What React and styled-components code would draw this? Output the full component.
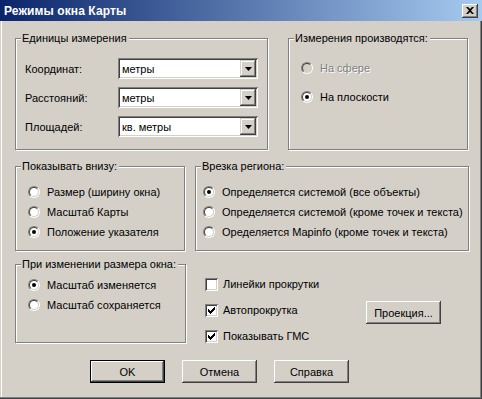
import React from 'react';
import styled, { createGlobalStyle } from 'styled-components';

const FACE = '#D4D0C8';

const Global = createGlobalStyle`
  html, body { margin: 0; padding: 0; background: ${FACE}; }
  body {
    font-family: "Liberation Sans", Arial, sans-serif;
    font-size: 11px;
    color: #000;
  }
  * { box-sizing: border-box; }
`;

const Window = styled.div`
  width: 482px;
  height: 399px;
  background: ${FACE};
  box-shadow: inset -1px -1px #404040, inset -2px -2px #808080,
    inset 1px 0 ${FACE}, inset 2px 0 #fff;
  display: flex;
  flex-direction: column;
  overflow: hidden;
`;

const TitleBar = styled.div`
  height: 21px;
  flex: none;
  background: linear-gradient(to right, #0a246a, #a6caf0);
  display: flex;
  align-items: center;
  justify-content: space-between;
  padding: 0 4px 0 4px;
  color: #fff;
  font-weight: bold;
  font-size: 12px;
  letter-spacing: 0.1px;
`;

const CloseBtn = styled.div`
  width: 16px;
  height: 14px;
  background: ${FACE};
  box-shadow: inset -1px -1px #404040, inset 1px 1px #fff,
    inset -2px -2px #808080, inset 2px 2px ${FACE};
  display: flex;
  align-items: center;
  justify-content: center;
`;

const Body = styled.div`
  flex: 1;
  display: flex;
  flex-direction: column;
  padding: 17px 0 0 15px;
`;

const Row = styled.div`
  display: flex;
  align-items: flex-start;
  gap: ${(p) => p.$gap}px;
  margin-top: ${(p) => p.$mt || 0}px;
`;

const Group = styled.div`
  position: relative;
  flex: none;
  width: ${(p) => p.$w}px;
  height: ${(p) => p.$h}px;
  border: 1px solid #808080;
  box-shadow: inset 1px 1px #fff, 1px 1px #fff;
  padding: ${(p) => p.$pt}px 0 0 ${(p) => p.$pl}px;
`;

const Caption = styled.span`
  position: absolute;
  top: -7px;
  left: 5px;
  padding: 0 2px 0 1px;
  line-height: 13px;
  background: ${FACE};
  white-space: nowrap;
`;

const UnitsGrid = styled.div`
  display: grid;
  grid-template-columns: 93px 140px;
  row-gap: 8px;
  align-items: center;
`;

const Label = styled.span`
  white-space: nowrap;
`;

const Combo = styled.div`
  height: 21px;
  background: #fff;
  box-shadow: inset 1px 1px #808080, inset -1px -1px #fff,
    inset 2px 2px #404040, inset -2px -2px ${FACE};
  display: flex;
  align-items: center;
  justify-content: space-between;
  padding: 2px 2px 2px 4px;
`;

const DropBtn = styled.div`
  width: 16px;
  height: 17px;
  background: ${FACE};
  box-shadow: inset -1px -1px #404040, inset 1px 1px ${FACE},
    inset -2px -2px #808080, inset 2px 2px #fff;
  display: flex;
  align-items: center;
  justify-content: center;
`;

const List = styled.div`
  display: flex;
  flex-direction: column;
  gap: ${(p) => p.$gap || 0}px;
`;

const OptionRow = styled.div`
  display: flex;
  align-items: center;
  gap: ${(p) => p.$gap || 7}px;
  height: ${(p) => p.$h || 20}px;
  white-space: nowrap;
  color: ${(p) => (p.$disabled ? '#808080' : '#000')};
  text-shadow: ${(p) => (p.$disabled ? '1px 1px #fff' : 'none')};
`;

const RadioOuter = styled.span`
  flex: none;
  width: 12px;
  height: 12px;
  border-radius: 50%;
  border: 1px solid;
  border-color: #808080 #fff #fff #808080;
  display: flex;
`;

const RadioInner = styled.span`
  flex: 1;
  border-radius: 50%;
  border: 1px solid;
  border-color: #404040 ${FACE} ${FACE} #404040;
  background: ${(p) => (p.$disabled ? FACE : '#fff')};
  display: flex;
  align-items: center;
  justify-content: center;
  &::after {
    content: '';
    width: 4px;
    height: 4px;
    border-radius: 50%;
    background: #000;
    display: ${(p) => (p.$checked ? 'block' : 'none')};
  }
`;

const CheckBox = styled.span`
  flex: none;
  width: 13px;
  height: 13px;
  background: #fff;
  box-shadow: inset 1px 1px #808080, inset -1px -1px #fff,
    inset 2px 2px #404040, inset -2px -2px ${FACE};
  display: flex;
  align-items: center;
  justify-content: center;
`;

const CheckCol = styled.div`
  width: 161px;
  padding-top: 12px;
  display: flex;
  flex-direction: column;
  gap: 10px;
`;

const Button = styled.div`
  flex: none;
  width: 75px;
  height: 23px;
  background: ${FACE};
  display: flex;
  align-items: center;
  justify-content: center;
  border: ${(p) => (p.$default ? '1px solid #000' : 'none')};
  box-shadow: inset -1px -1px #404040, inset 1px 1px #fff,
    inset -2px -2px #808080, inset 2px 2px ${FACE};
  margin-top: ${(p) => p.$mt || 0}px;
`;

const ButtonRow = styled.div`
  display: flex;
  gap: 17px;
  padding-left: 75px;
  margin-top: 16px;
`;

function Radio({ checked, disabled, label, gap }) {
  return (
    <OptionRow $disabled={disabled} $gap={gap}>
      <RadioOuter>
        <RadioInner $checked={checked} $disabled={disabled} />
      </RadioOuter>
      <span>{label}</span>
    </OptionRow>
  );
}

function Check({ checked, label }) {
  return (
    <OptionRow $gap={5} $h={16}>
      <CheckBox>
        {checked && (
          <svg width="7" height="7" viewBox="0 0 7 7">
            <path d="M0 2h1v1h1v1h1V3h1V2h1V1h1V0h1v3H6v1H5v1H4v1H3v1H2V6H1V5H0z" fill="#000" />
          </svg>
        )}
      </CheckBox>
      <span>{label}</span>
    </OptionRow>
  );
}

function Select({ value }) {
  return (
    <Combo>
      <span>{value}</span>
      <DropBtn>
        <svg width="7" height="4" viewBox="0 0 7 4">
          <path d="M0 0h7L3.5 4z" fill="#000" />
        </svg>
      </DropBtn>
    </Combo>
  );
}

export default function App() {
  return (
    <>
      <Global />
      <Window>
        <TitleBar>
          <span>Режимы окна Карты</span>
          <CloseBtn>
            <svg width="8" height="7" viewBox="0 0 8 7">
              <path d="M0 0h2l2 2 2-2h2L5 3.5 8 7H6L4 5 2 7H0l3-3.5z" fill="#000" />
            </svg>
          </CloseBtn>
        </TitleBar>
        <Body>
          <Row $gap={20}>
            <Group $w={253} $h={112} $pt={19} $pl={9}>
              <Caption>Единицы измерения</Caption>
              <UnitsGrid>
                <Label>Координат:</Label>
                <Select value="метры" />
                <Label>Расстояний:</Label>
                <Select value="метры" />
                <Label>Площадей:</Label>
                <Select value="кв. метры" />
              </UnitsGrid>
            </Group>
            <Group $w={180} $h={112} $pt={19} $pl={12}>
              <Caption>Измерения производятся:</Caption>
              <List $gap={9}>
                <Radio disabled label="На сфере" />
                <Radio checked label="На плоскости" />
              </List>
            </Group>
          </Row>
          <Row $gap={10} $mt={16}>
            <Group $w={170} $h={85} $pt={15} $pl={12}>
              <Caption>Показывать внизу:</Caption>
              <List>
                <Radio label="Размер (ширину окна)" />
                <Radio label="Масштаб Карты" />
                <Radio checked label="Положение указателя" />
              </List>
            </Group>
            <Group $w={274} $h={85} $pt={15} $pl={7}>
              <Caption>Врезка региона:</Caption>
              <List>
                <Radio checked label="Определяется системой (все объекты)" />
                <Radio label="Определяется системой (кроме точек и текста)" />
                <Radio label="Оределяется Mapinfo (кроме точек и текста)" />
              </List>
            </Group>
          </Row>
          <Row $gap={0} $mt={13}>
            <Group $w={171} $h={79} $pt={10} $pl={12}>
              <Caption>При изменении размера окна:</Caption>
              <List>
                <Radio checked label="Масштаб изменяется" />
                <Radio label="Масштаб сохраняется" />
              </List>
            </Group>
            <CheckCol style={{ marginLeft: 19 }}>
              <Check label="Линейки прокрутки" />
              <Check checked label="Автопрокрутка" />
              <Check checked label="Показывать ГМС" />
            </CheckCol>
            <Button $mt={37}>Проекция...</Button>
          </Row>
          <ButtonRow>
            <Button $default>OK</Button>
            <Button>Отмена</Button>
            <Button>Справка</Button>
          </ButtonRow>
        </Body>
      </Window>
    </>
  );
}
